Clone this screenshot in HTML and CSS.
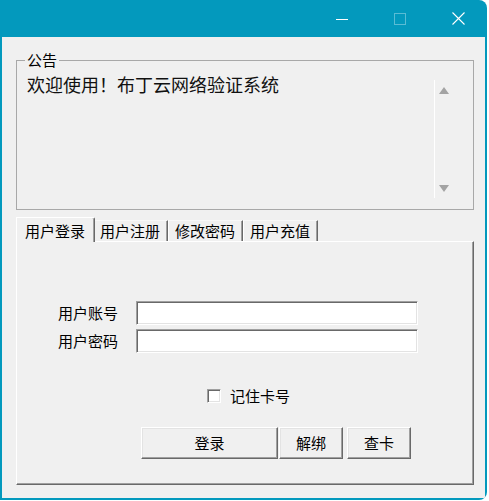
FILE: index.html
```html
<!DOCTYPE html>
<html lang="zh-CN">
<head>
<meta charset="utf-8">
<title>布丁云网络验证系统</title>
<link rel="stylesheet" href="styles.css">
</head>
<body>
<div class="window">
  <div class="titlebar">
    <div class="cap">
      <svg width="12" height="12" viewBox="0 0 12 12"><line x1="0" y1="6.5" x2="12" y2="6.5" stroke="#fff" stroke-width="1"/></svg>
    </div>
    <div class="cap">
      <svg width="12" height="12" viewBox="0 0 12 12"><rect x="0.5" y="0.5" width="11" height="11" fill="none" stroke="#fff" stroke-opacity="0.35" stroke-width="1"/></svg>
    </div>
    <div class="cap">
      <svg width="13" height="13" viewBox="0 0 13 13"><path d="M0.5 0.5 L12.5 12.5 M12.5 0.5 L0.5 12.5" stroke="#fff" stroke-width="1.1" fill="none"/></svg>
    </div>
  </div>
  <div class="frame">
    <div class="client">
      <fieldset class="group">
        <legend class="group-title">公告</legend>
        <div class="notice">
          <div class="notice-text">欢迎使用！布丁云网络验证系统</div>
          <div class="vscroll">
            <svg width="10" height="7" viewBox="0 0 10 7"><polygon points="5,0 10,7 0,7" fill="#a3a3a3"/></svg>
            <svg width="10" height="7" viewBox="0 0 10 7"><polygon points="0,0 10,0 5,7" fill="#a3a3a3"/></svg>
          </div>
        </div>
      </fieldset>
      <div class="tabs">
        <div class="tab active">用户登录</div>
        <div class="tab">用户注册</div>
        <div class="tab">修改密码</div>
        <div class="tab">用户充值</div>
      </div>
      <div class="panel">
        <div class="form">
          <div class="row"><span class="label">用户账号</span><div class="input"></div></div>
          <div class="row"><span class="label">用户密码</span><div class="input"></div></div>
        </div>
        <div class="check"><span class="box"></span><span class="check-label">记住卡号</span></div>
        <div class="buttons">
          <button class="btn wide">登录</button>
          <button class="btn narrow first">解绑</button>
          <button class="btn narrow">查卡</button>
        </div>
      </div>
    </div>
  </div>
</div>
</body>
</html>
```
FILE: styles.css
```css
html, body {
  margin: 0;
  padding: 0;
  background: #ffffff;
}
body {
  width: 489px;
  height: 501px;
  overflow: hidden;
  font-family: "Noto Sans CJK SC", "Noto Sans", sans-serif;
  color: #000;
}
.window {
  width: 487px;
  height: 500px;
  background: #0399bd;
  border-radius: 0 8px 8px 0;
  overflow: hidden;
  display: flex;
  flex-direction: column;
}
.titlebar {
  height: 37px;
  flex: 0 0 37px;
  display: flex;
  justify-content: flex-end;
}
.cap {
  width: 58px;
  height: 37px;
  display: flex;
  align-items: center;
  justify-content: center;
}
.frame {
  flex: 1;
  padding: 0 2px 2px 2px;
  display: flex;
}
.client {
  flex: 1;
  background: #f0f0f0;
  display: flex;
  flex-direction: column;
  padding-top: 14px;
}
.group {
  margin: 0 11px 0 14px;
  padding: 4px 21px 10px 8px;
  border: 1px solid #a8a8a8;
  min-width: 0;
}
.group-title {
  padding: 0 2px;
  font-size: 15px;
  line-height: 18px;
}
.notice {
  display: flex;
  height: 126px;
}
.notice-text {
  flex: 1;
  font-size: 18px;
  line-height: 22px;
  padding-left: 2px;
  color: #111;
}
.vscroll {
  width: 17px;
  border-left: 1px solid #ffffff;
  margin: 7px 0 1px;
  padding: 7px 0 6px;
  display: flex;
  flex-direction: column;
  justify-content: space-between;
  align-items: center;
}
.tabs {
  display: flex;
  align-items: flex-end;
  margin: 7px 0 0 16px;
}
.tab {
  box-sizing: border-box;
  height: 21px;
  padding: 0 7px 0 6px;
  font-size: 15px;
  line-height: 19px;
  border-top: 1px solid #f8f8f8;
  border-left: 1px solid #ffffff;
  border-right: 1px solid #696969;
  box-shadow: inset -1px 0 0 #a0a0a0;
  background: #f0f0f0;
  white-space: nowrap;
}
.tab.active {
  position: relative;
  z-index: 1;
  height: 25px;
  margin: 0 -2px -1px -2px;
  padding: 3px 9px 2px 8px;
  border-top: 1px solid #ffffff;
  border-top-right-radius: 2px;
}
.panel {
  box-sizing: border-box;
  height: 244px;
  margin: 0 11px 13px 14px;
  border-top: 1px solid #ffffff;
  border-left: 1px solid #ffffff;
  border-right: 1px solid #696969;
  border-bottom: 1px solid #696969;
  box-shadow: inset -1px -1px 0 #a0a0a0;
  padding-top: 59px;
  display: flex;
  flex-direction: column;
}
.form {
  display: flex;
  flex-direction: column;
  gap: 4px;
  padding-left: 41px;
}
.row {
  display: flex;
  align-items: center;
  height: 24px;
}
.label {
  width: 78px;
  font-size: 15px;
  line-height: 20px;
  position: relative;
  top: 0;
}
.input {
  box-sizing: border-box;
  width: 282px;
  height: 24px;
  background: #ffffff;
  border: 1px solid;
  border-color: #a0a0a0 #ffffff #ffffff #a0a0a0;
  box-shadow: inset 1px 1px 0 #696969, inset -1px -1px 0 #e3e3e3;
}
.check {
  display: flex;
  align-items: center;
  height: 20px;
  margin-top: 33px;
  padding-left: 190px;
  gap: 9px;
}
.box {
  box-sizing: border-box;
  width: 14px;
  height: 14px;
  background: #ffffff;
  border: 1px solid;
  border-color: #a0a0a0 #ffffff #ffffff #a0a0a0;
  box-shadow: inset 1px 1px 0 #696969, inset -1px -1px 0 #e3e3e3;
}
.check-label {
  font-size: 15px;
  line-height: 20px;
}
.buttons {
  display: flex;
  margin-top: 21px;
  padding-left: 124px;
}
.btn {
  box-sizing: border-box;
  height: 32px;
  padding: 0;
  margin: 0;
  font-family: inherit;
  font-size: 15px;
  line-height: 20px;
  color: #000;
  background: #f0f0f0;
  border: 1px solid;
  border-color: #ffffff #696969 #696969 #ffffff;
  box-shadow: inset -1px -1px 0 #a0a0a0, inset 1px 1px 0 #e3e3e3;
  border-radius: 0;
}
.btn.wide {
  width: 137px;
  margin-right: 1px;
}
.btn.narrow {
  width: 64px;
}
.btn.first {
  margin-right: 4px;
}
```
